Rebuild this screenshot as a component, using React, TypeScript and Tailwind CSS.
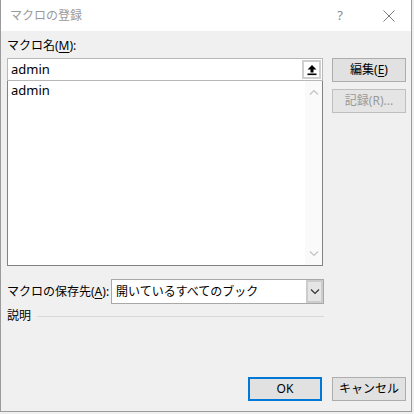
const FONT = "font-['Noto_Sans','Noto_Sans_CJK_JP',sans-serif]";

function UpArrowIcon() {
  return (
    <svg width="12" height="12" viewBox="0 0 12 12">
      <path d="M6 1 L10.5 5.5 H7.5 V8.5 H4.5 V5.5 H1.5 Z" fill="#000" />
      <rect x="1.5" y="9.5" width="9" height="1.6" fill="#000" />
    </svg>
  );
}

function Chevron({ dir, color }: { dir: 'up' | 'down'; color: string }) {
  const d = dir === 'up' ? 'M1 5.5 L5 1.5 L9 5.5' : 'M1 1.5 L5 5.5 L9 1.5';
  return (
    <svg width="10" height="7" viewBox="0 0 10 7">
      <path d={d} fill="none" stroke={color} strokeWidth="1.2" />
    </svg>
  );
}

function Button({ children, primary, disabled }: { children: React.ReactNode; primary?: boolean; disabled?: boolean }) {
  return (
    <button
      type="button"
      className={
        primary
          ? 'flex h-[24px] w-[74px] items-center justify-center border-2 border-[#0078d7] bg-[#e1e1e1] text-[12px] text-black'
          : disabled
            ? 'flex h-[24px] w-[74px] items-center justify-center border border-[#bfbfbf] bg-[#e5e5e5] text-[12px] text-[#9a9a9a]'
            : 'flex h-[24px] w-[74px] items-center justify-center border border-[#adadad] bg-[#e1e1e1] text-[12px] text-black'
      }
    >
      {children}
    </button>
  );
}

export default function App() {
  return (
    <div className={`h-[414px] w-[414px] bg-[#f0f0f0] ${FONT}`}>
      <div className="flex h-[412px] w-[412px] flex-col border-b border-l border-r border-[#9b9b9b] bg-[#f0f0f0]">
        {/* Title bar */}
        <div className="flex h-[31px] shrink-0 items-center bg-white">
          <span className="ml-[9px] text-[12px] leading-none text-[#9a9a9a]">マクロの登録</span>
          <span className="ml-auto mr-[40px] text-[13px] leading-none text-[#8a8a8a]">?</span>
          <svg width="12" height="12" viewBox="0 0 12 12" className="mr-[16px]">
            <path d="M0.5 0.5 L11.5 11.5 M11.5 0.5 L0.5 11.5" stroke="#7a7a7a" strokeWidth="1" />
          </svg>
        </div>

        {/* Body */}
        <div className="flex flex-1 flex-col pl-[6px] pr-[4px]">
          <div className="flex">
            <div className="flex w-[316px] flex-col">
              <div className="flex h-[27px] items-center pt-[3px] text-[12px] leading-none text-black">
                マクロ名(<span className="underline underline-offset-2">M</span>):
              </div>
              <div className="flex h-[23px] items-center border border-[#b8b8b8] bg-white pl-[3px] pr-[1px]">
                <span className="flex-1 text-[13px] leading-none text-black">admin</span>
                <div className="flex h-[19px] w-[19px] items-center justify-center border-2 border-[#cfcfcf] bg-white">
                  <UpArrowIcon />
                </div>
              </div>
              <div className="flex h-[185px] border border-t-0 border-[#828282] bg-white">
                <div className="flex-1 pl-[3px] pt-[1px] text-[13px] leading-[16px] text-black">admin</div>
                <div className="flex w-[17px] flex-col items-center justify-between bg-[#fafafa] py-[8px]">
                  <Chevron dir="up" color="#c2c2c2" />
                  <Chevron dir="down" color="#c2c2c2" />
                </div>
              </div>
            </div>
            <div className="ml-[9px] flex flex-col gap-[7px] pt-[27px]">
              <Button>
                編集(<span className="underline underline-offset-2">E</span>)
              </Button>
              <Button disabled>記録(R)...</Button>
            </div>
          </div>

          <div className="mt-[13px] flex w-[317px] items-center">
            <span className="w-[104px] text-[12px] leading-none text-black">
              マクロの保存先(<span className="underline underline-offset-2">A</span>):
            </span>
            <div className="flex h-[25px] flex-1 items-center border border-[#a8a8a8] bg-white pl-[4px]">
              <span className="flex-1 text-[12px] leading-none text-black">開いているすべてのブック</span>
              <div className="flex h-[23px] w-[17px] items-center justify-center border-2 border-[#cccccc] bg-[#e5e5e5]">
                <Chevron dir="down" color="#333" />
              </div>
            </div>
          </div>

          <div className="mt-[4px] flex h-[16px] w-[317px] items-center gap-[6px]">
            <span className="text-[12px] leading-none text-black">説明</span>
            <div className="h-px flex-1 bg-[#d8d8d8]" />
          </div>

          <div className="mt-auto mb-[10px] flex justify-end gap-[10px] pr-[1px]">
            <Button primary>OK</Button>
            <Button>キャンセル</Button>
          </div>
        </div>
      </div>
    </div>
  );
}
